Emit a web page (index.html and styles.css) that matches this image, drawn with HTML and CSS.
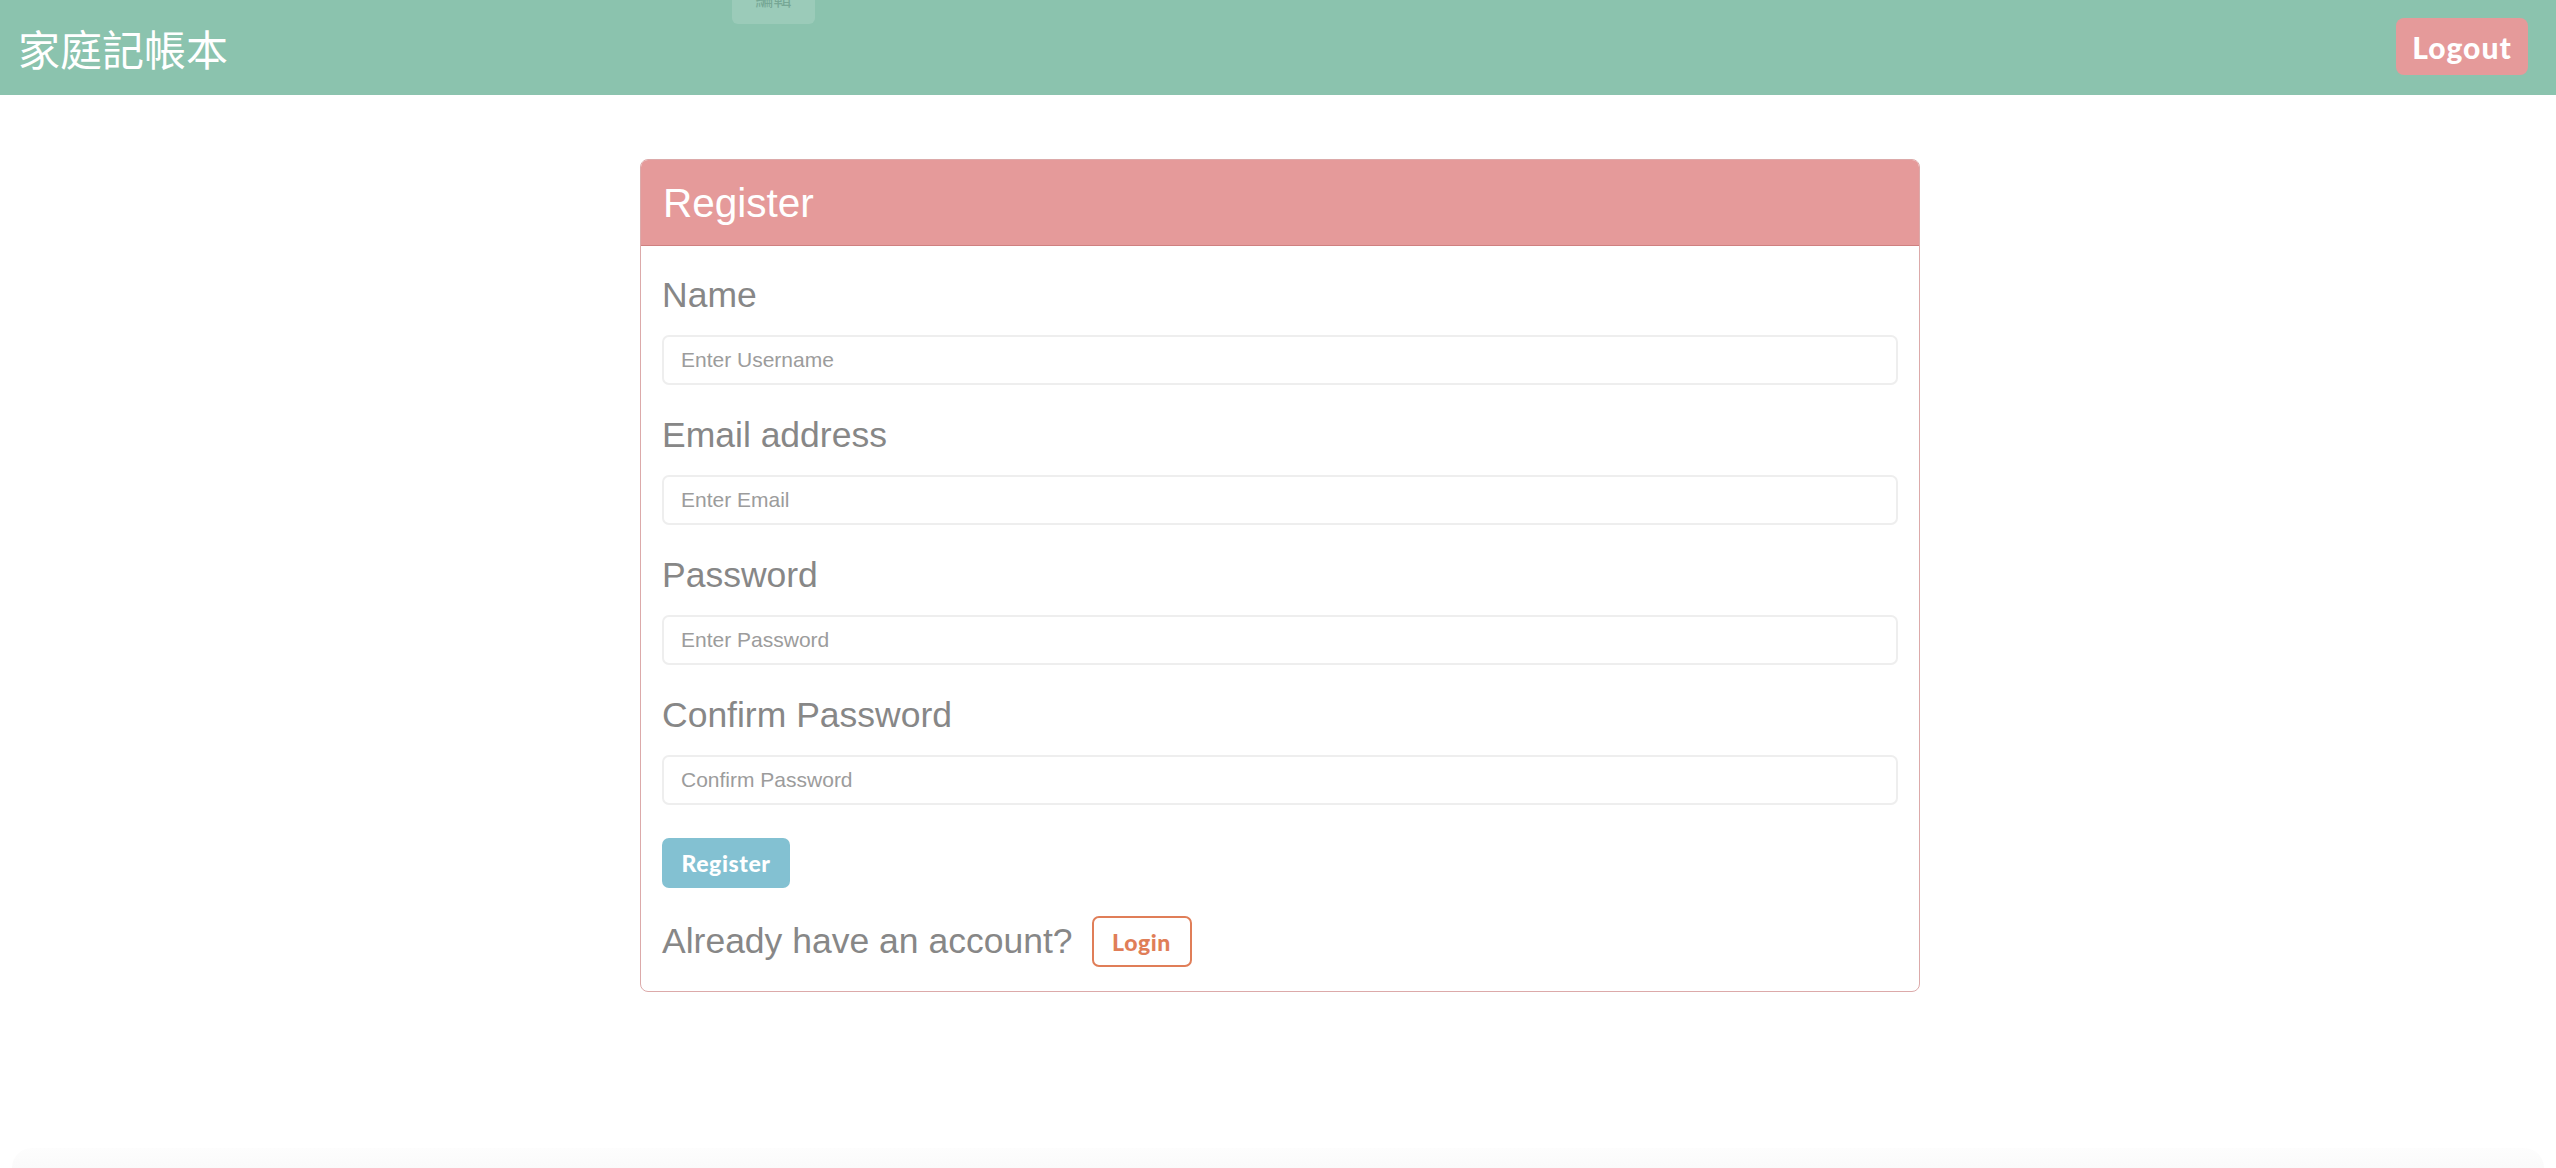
FILE: index.html
```html
<!DOCTYPE html>
<html lang="zh-Hant">
<head>
<meta charset="utf-8">
<title>家庭記帳本</title>
<link rel="stylesheet" href="styles.css">
</head>
<body>
<nav class="navbar">
  <span class="brand">家庭記帳本</span>
  <button class="btn btn-logout">Logout</button>
</nav>
<div class="peek-tip"><span>編輯</span></div>

<main class="page">
  <section class="card">
    <header class="card-header">
      <h3 class="card-title">Register</h3>
    </header>
    <form class="card-body">
      <div class="group">
        <label class="label">Name</label>
        <input class="input" type="text" placeholder="Enter Username">
      </div>
      <div class="group">
        <label class="label">Email address</label>
        <input class="input" type="email" placeholder="Enter Email">
      </div>
      <div class="group">
        <label class="label">Password</label>
        <input class="input" type="password" placeholder="Enter Password">
      </div>
      <div class="group">
        <label class="label">Confirm Password</label>
        <input class="input" type="password" placeholder="Confirm Password">
      </div>
      <button type="button" class="btn btn-register">Register</button>
      <div class="login-row">
        <span class="login-text">Already have an account?</span>
        <button type="button" class="btn btn-login">Login</button>
      </div>
    </form>
  </section>
</main>
<div class="bottom-fade"></div>
</body>
</html>
```
FILE: styles.css
```css
* { box-sizing: border-box; }

html, body {
  margin: 0;
  padding: 0;
  background: #ffffff;
}

body {
  font-family: "Liberation Sans", Arial, sans-serif;
  min-height: 1168px;
  position: relative;
  overflow: hidden;
}

.navbar {
  height: 95px;
  background: #8bc3ae;
  display: flex;
  align-items: center;
  justify-content: space-between;
  padding: 0 28px 0 18px;
}

.brand {
  font-family: "Noto Sans CJK TC", "Noto Sans CJK SC", sans-serif;
  font-size: 42px;
  line-height: 1;
  color: #ffffff;
}

.btn {
  font-family: Lato, "Open Sans", sans-serif;
  font-weight: 900;
  border: none;
  cursor: pointer;
  display: inline-flex;
  align-items: center;
  justify-content: center;
}

.btn-logout {
  height: 57px;
  width: 132px;
  background: #e59a9a;
  color: #ffffff;
  font-size: 30px;
  letter-spacing: 1px;
  border-radius: 8px;
  padding: 0;
  margin-top: -2px;
}

.peek-tip {
  position: absolute;
  left: 732px;
  top: 0;
  width: 83px;
  height: 24px;
  background: rgba(255, 255, 255, 0.14);
  border-radius: 0 0 6px 6px;
  overflow: hidden;
  display: flex;
  justify-content: center;
}

.peek-tip span {
  font-family: "Noto Sans CJK TC", sans-serif;
  font-size: 18px;
  line-height: 18px;
  color: #76a795;
  margin-top: -11px;
}

.page {
  padding: 64px 0 0 4px;
}

.card {
  width: 1280px;
  margin: 0 auto;
  border: 1px solid #dcaaaa;
  border-radius: 8px;
  overflow: hidden;
  background: #ffffff;
}

.card-header {
  background: #e59a9a;
  border-bottom: 1px solid #cf8080;
  height: 86px;
  padding: 0 22px;
  display: flex;
  align-items: center;
}

.card-title {
  margin: 0;
  font-size: 40.5px;
  font-weight: 400;
  line-height: 48px;
  color: #ffffff;
}

.card-body {
  padding: 28px 21px 24px;
  margin: 0;
}

.group {
  margin-bottom: 29px;
}

.label {
  display: block;
  font-size: 35.5px;
  line-height: 43px;
  color: #878787;
  margin-bottom: 18px;
}

.input {
  display: block;
  width: 100%;
  height: 50px;
  border: 2px solid #eeeeee;
  border-radius: 7px;
  padding: 0 17px;
  font-family: "Liberation Sans", Arial, sans-serif;
  font-size: 21px;
  color: #555;
  background: #ffffff;
  outline: none;
}

.input::placeholder {
  color: #9c9c9c;
}

.btn-register {
  margin-top: 4px;
  height: 50px;
  width: 128px;
  padding: 0;
  background: #83c1d2;
  color: #ffffff;
  font-size: 23px;
  letter-spacing: 0.6px;
  border-radius: 7px;
}

.login-row {
  margin-top: 28px;
  display: flex;
  align-items: center;
  gap: 19px;
}

.login-text {
  font-size: 35.5px;
  line-height: 43px;
  color: #878787;
}

.btn-login {
  height: 51px;
  width: 100px;
  padding: 0;
  background: #ffffff;
  border: 2px solid #e07e58;
  color: #e07e58;
  font-size: 23px;
  letter-spacing: 0.6px;
  border-radius: 7px;
}

.bottom-fade {
  position: absolute;
  left: 12px;
  right: 12px;
  bottom: 0;
  height: 20px;
  border-radius: 30px 30px 0 0;
  background: linear-gradient(#fdfdfd, #fafafa);
}
```
